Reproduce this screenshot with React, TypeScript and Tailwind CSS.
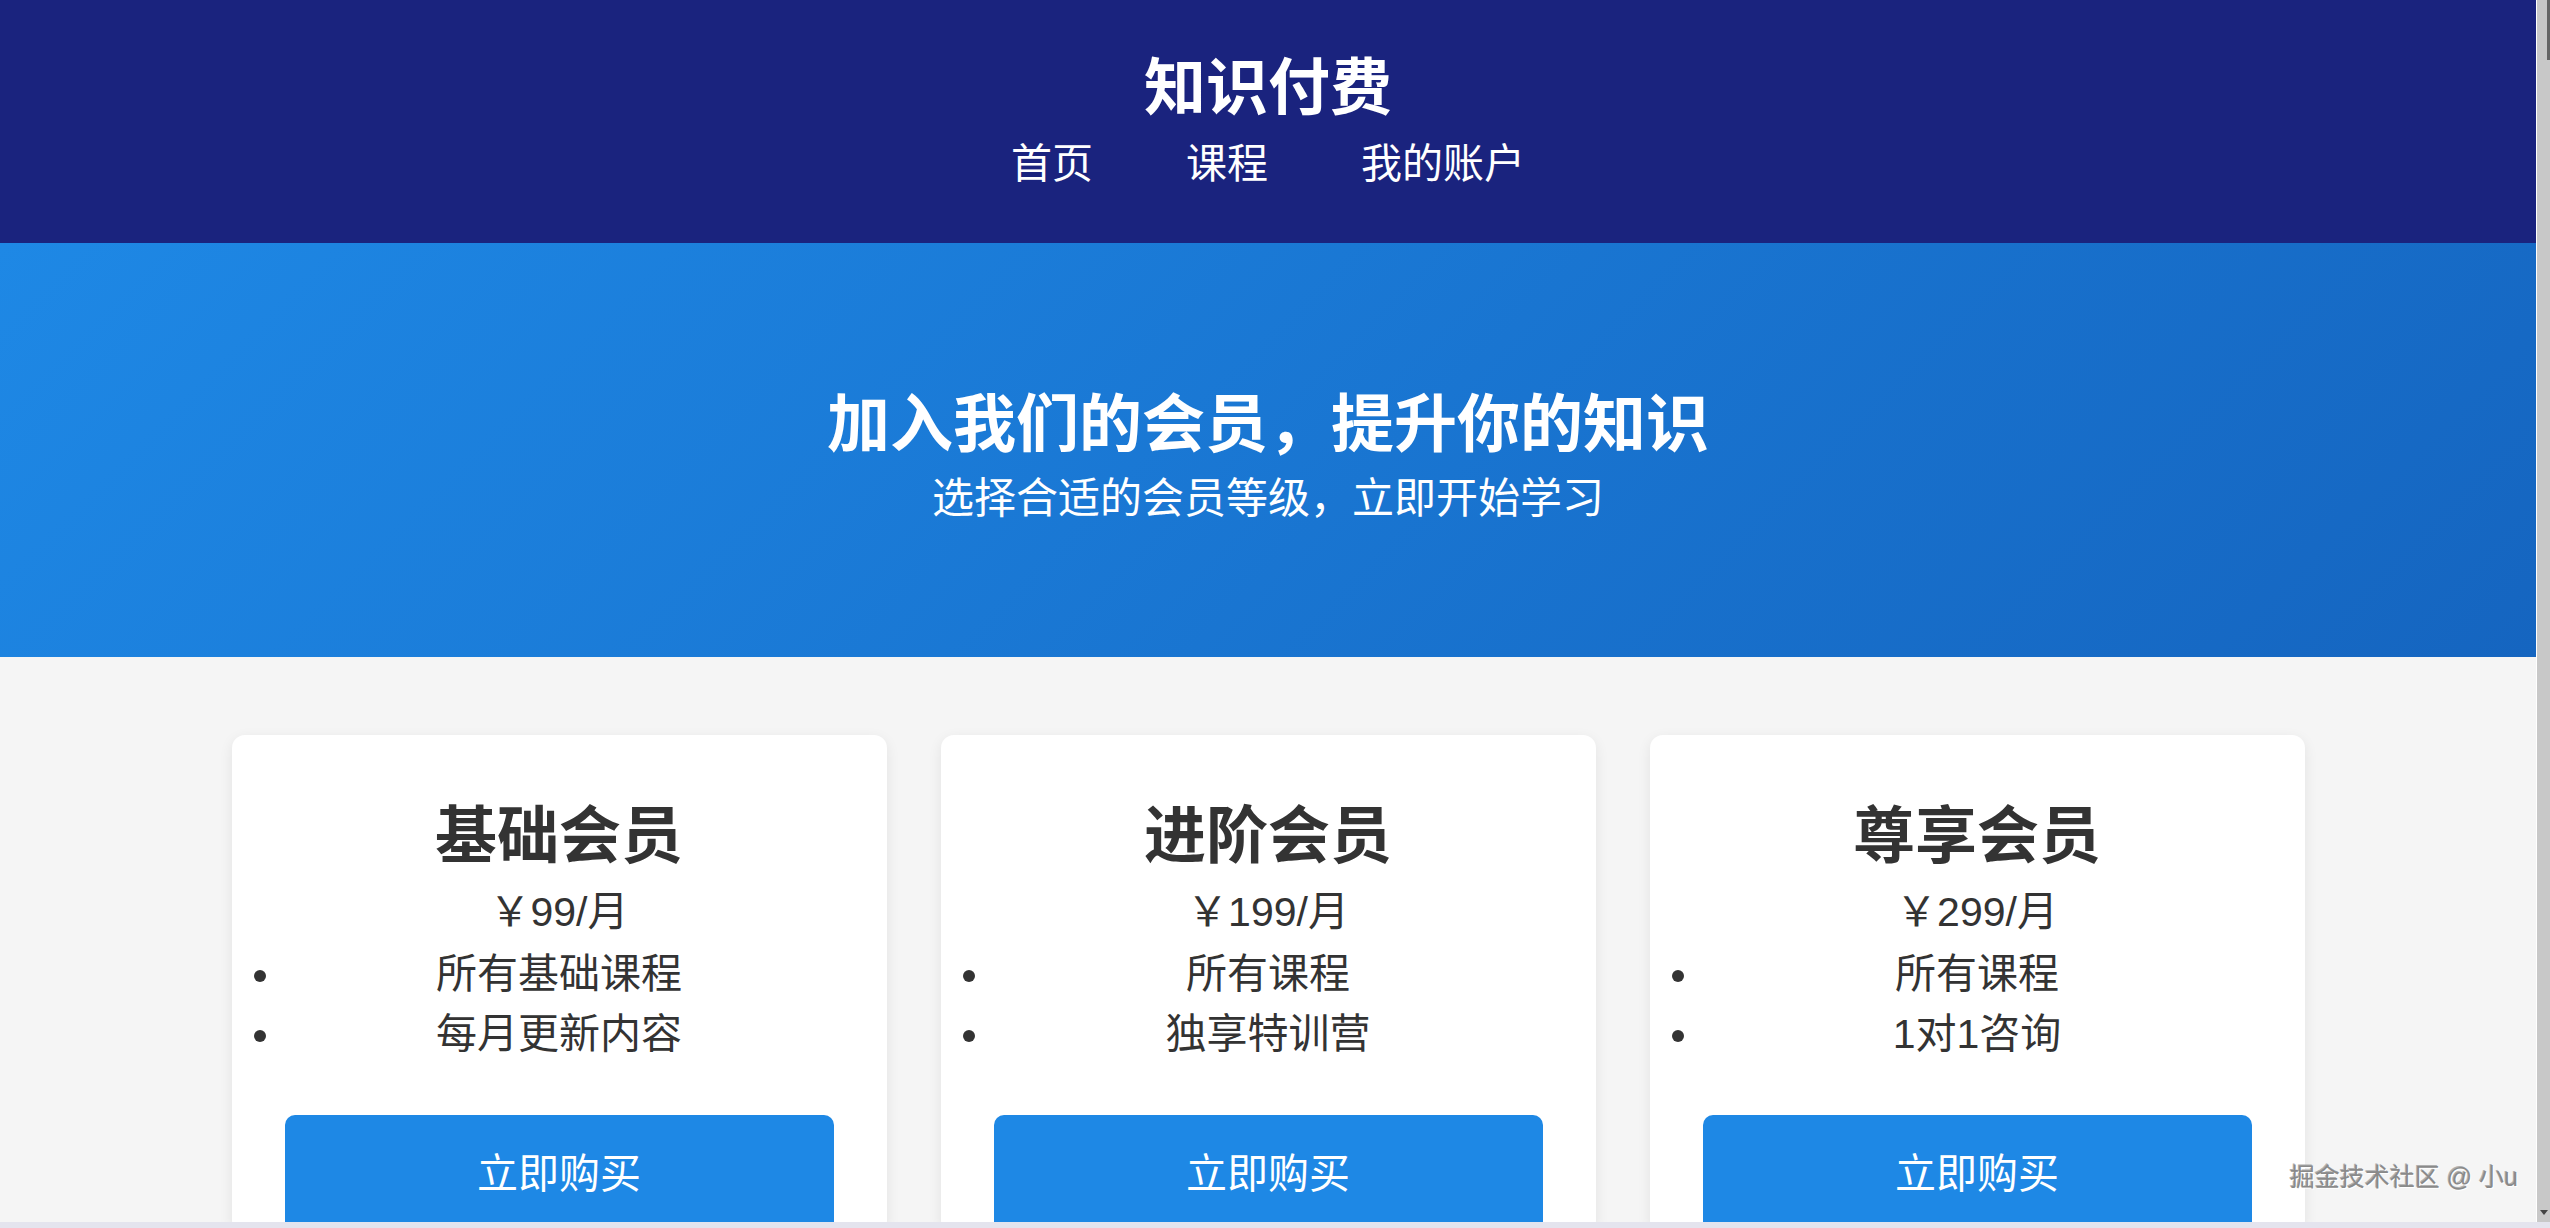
import React from "react";

const FONT = { fontFamily: '"Liberation Sans", "Noto Sans CJK SC", sans-serif' };

type Plan = { name: string; price: string; items: string[] };

const plans: Plan[] = [
  { name: "基础会员", price: "￥99/月", items: ["所有基础课程", "每月更新内容"] },
  { name: "进阶会员", price: "￥199/月", items: ["所有课程", "独享特训营"] },
  { name: "尊享会员", price: "￥299/月", items: ["所有课程", "1对1咨询"] },
];

function Card({ plan }: { plan: Plan }) {
  return (
    <div className="w-[655px] shrink-0 rounded-[13px] bg-white px-[53px] pt-[57px] text-center text-[#333] shadow-[0_4px_14px_rgba(0,0,0,0.08)]">
      <h3 className="text-[62px] leading-[90px] font-bold">{plan.name}</h3>
      <div className="text-[41px] leading-[60px]">{plan.price}</div>
      <ul className="mt-[2px] list-disc pl-0">
        {plan.items.map((it) => (
          <li key={it} className="text-[41px] leading-[60px]">
            {it}
          </li>
        ))}
      </ul>
      <button className="mt-[51px] w-full rounded-[10px] bg-[#1e88e5] py-[29px] text-[41px] leading-[60px] text-white">
        立即购买
      </button>
    </div>
  );
}

export default function App() {
  return (
    <div className="flex h-[1228px] w-[2550px] flex-col overflow-hidden bg-[#f5f5f5]" style={FONT}>
      <div className="flex min-h-0 flex-1">
        <div className="relative flex w-[2536px] flex-col overflow-hidden">
          <header className="h-[243px] shrink-0 bg-[#1a237e] pt-[44px] text-center text-white">
            <h1 className="text-[62px] leading-[90px] font-bold">知识付费</h1>
            <nav className="flex justify-center gap-[93px] text-[41px] leading-[60px]">
              <a>首页</a>
              <a>课程</a>
              <a>我的账户</a>
            </nav>
          </header>
          <section className="h-[414px] shrink-0 bg-[linear-gradient(135deg,#1e88e5,#1565c0)] pt-[136px] text-center text-white">
            <h2 className="text-[63px] leading-[90px] font-bold">加入我们的会员，提升你的知识</h2>
            <p className="text-[42px] leading-[60px]">选择合适的会员等级，立即开始学习</p>
          </section>
          <section className="flex flex-1 justify-center gap-[54px] bg-[#f5f5f5] pt-[78px]">
            {plans.map((p) => (
              <Card key={p.name} plan={p} />
            ))}
          </section>
          <div className="absolute right-[18px] bottom-[30px] text-[25px] leading-[30px] text-[#8a8a8a] [text-shadow:1px_1px_0_#ffffff,-1px_-1px_0_#b0b0b0]">
            掘金技术社区 @ 小u
          </div>
        </div>
        <div className="flex w-[14px] flex-col border-l border-white bg-[#c8c8c8]">
          <div className="h-[60px] border-r-[3px] border-[#666]" />
          <div className="flex-1" />
          <div className="flex h-[20px] items-center justify-center">
            <div className="h-0 w-0 border-x-[4px] border-t-[5px] border-x-transparent border-t-[#444]" />
          </div>
        </div>
      </div>
      <div className="h-[6px] shrink-0 bg-[#e4e4ee]" />
    </div>
  );
}
